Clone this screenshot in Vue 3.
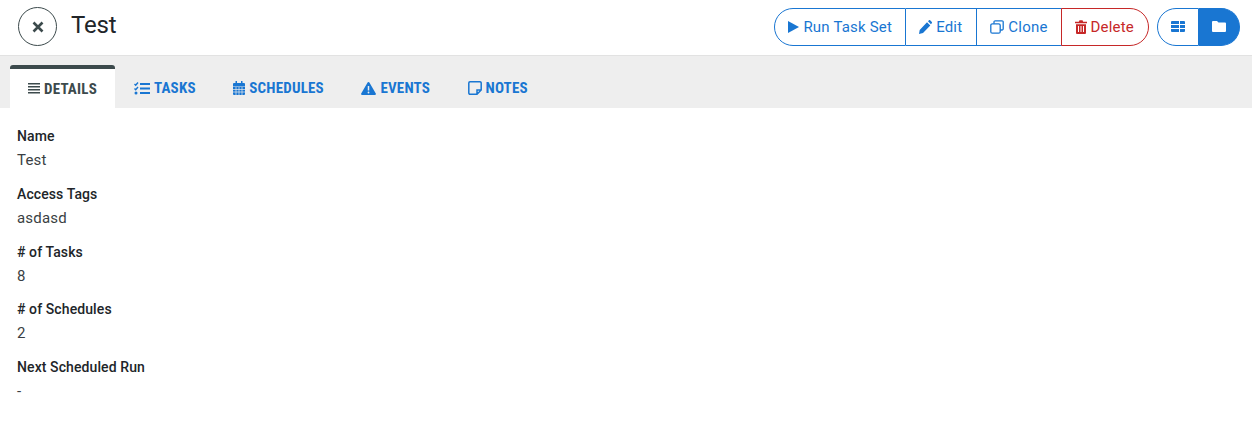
<script setup>
const details = [
  { label: 'Name', value: 'Test' },
  { label: 'Access Tags', value: 'asdasd' },
  { label: '# of Tasks', value: '8' },
  { label: '# of Schedules', value: '2' },
  { label: 'Next Scheduled Run', value: '-' },
]
</script>

<template>
  <div class="page">
    <header class="top">
      <button class="close">
        <svg width="12" height="12" viewBox="0 0 12 12"><path d="M1.500 1.500l9 9M10.500 1.500l-9 9" stroke="#3c4a4c" stroke-width="2.600" fill="none"/></svg>
      </button>
      <h1>Test</h1>
      <div class="actions">
        <div class="group">
          <button class="btn">
            <svg width="11" height="12" viewBox="0 0 11 12"><path d="M0 0v12l11-6z" fill="#1976d2"/></svg>
            Run Task Set
          </button>
          <button class="btn edit">
            <svg width="13" height="14" viewBox="0 0 13 14"><path d="M0 14l.7-4L8 2.200l3.300 3.300-7.300 7.600zM9 1.200l.7-.8a1.200 1.200 0 0 1 1.700 0l1.200 1.300a1.200 1.200 0 0 1 0 1.700l-.7.8z" fill="#1976d2"/></svg>
            Edit
          </button>
          <button class="btn">
            <svg width="14" height="14" viewBox="0 0 14 14"><path d="M4 3.800V2a1.200 1.200 0 0 1 1.200-1.200h6.800A1.200 1.200 0 0 1 13.200 2v6.800a1.200 1.200 0 0 1-1.200 1.200h-1.800" stroke="#1976d2" stroke-width="1.300" fill="none"/><rect x=".8" y="3.800" width="9.400" height="9.400" rx="1.500" stroke="#1976d2" stroke-width="1.300" fill="none"/></svg>
            Clone
          </button>
          <button class="btn danger">
            <svg width="12" height="14" viewBox="0 0 12 14"><path d="M0 1.800h3.800L4.500.2h3l.7 1.600H12v1.400H0zM1 4.200h10V13a1 1 0 0 1-1 1H2a1 1 0 0 1-1-1z" fill="#c62828"/><path d="M3.500 6v6M6 6v6M8.500 6v6" stroke="#fff"/></svg>
            Delete
          </button>
        </div>
        <div class="group view">
          <button class="btn">
            <svg width="14" height="11" viewBox="0 0 14 11"><path d="M0 1a1 1 0 0 1 1-1h7v3H0zM9 0h4a1 1 0 0 1 1 1v2H9zM0 4h8v3H0zM9 4h5v3H9zM0 8h8v3H1a1 1 0 0 1-1-1zM9 8h5v2a1 1 0 0 1-1 1H9z" fill="#1976d2"/></svg>
          </button>
          <button class="btn on">
            <svg width="14" height="11" viewBox="0 0 14 11"><path d="M0 1a1 1 0 0 1 1-1h4l1.500 1.500H13a1 1 0 0 1 1 1V10a1 1 0 0 1-1 1H1a1 1 0 0 1-1-1z" fill="#fff"/></svg>
          </button>
        </div>
      </div>
    </header>

    <nav class="tabs">
      <a class="tab active">
        <svg width="12" height="12" viewBox="0 0 12 12"><path d="M0 .800h12M0 3.800h12M0 6.800h12M0 9.800h12" stroke="#3c4a4c" stroke-width="1.500"/></svg>
        <span>DETAILS</span>
      </a>
      <a class="tab">
        <svg width="16" height="13" viewBox="0 0 16 13"><path d="M6 2h10M6 6.500h10M6 11h10" stroke="#1976d2" stroke-width="2"/><path d="M.5 2l1.200 1.200L4 .5M.5 6.500l1.200 1.200L4 5" stroke="#1976d2" stroke-width="1.400" fill="none"/><circle cx="2" cy="11" r="1.500" fill="#1976d2"/></svg>
        <span>TASKS</span>
      </a>
      <a class="tab">
        <svg width="12" height="14" viewBox="0 0 12 14"><path d="M1 2h10a1 1 0 0 1 1 1v2H0V3a1 1 0 0 1 1-1zM2.500 0h1.500v3H2.500zM8 0h1.500v3H8z" fill="#1976d2"/><path d="M0 5.500h12V13a1 1 0 0 1-1 1H1a1 1 0 0 1-1-1z" fill="#1976d2"/><path d="M0 8.500h12M0 11h12M3 6v8M6 6v8M9 6v8" stroke="#eee" stroke-width=".7"/></svg>
        <span>SCHEDULES</span>
      </a>
      <a class="tab">
        <svg width="15" height="13" viewBox="0 0 15 13"><path d="M7.500 0a1 1 0 0 1 .9.500l6.400 11a1 1 0 0 1-.9 1.500H1.100a1 1 0 0 1-.9-1.500l6.400-11A1 1 0 0 1 7.500 0z" fill="#1976d2"/><path d="M7.500 4v4.500" stroke="#eee" stroke-width="1.500"/><circle cx="7.500" cy="10.500" r=".9" fill="#eee"/></svg>
        <span>EVENTS</span>
      </a>
      <a class="tab">
        <svg width="14" height="14" viewBox="0 0 14 14"><path d="M13.200 9V2a1.200 1.200 0 0 0-1.200-1.200H2A1.200 1.200 0 0 0 .8 2v10A1.200 1.200 0 0 0 2 13.200h7zM13.200 9H9v4.200" stroke="#1976d2" stroke-width="1.500" fill="none"/></svg>
        <span>NOTES</span>
      </a>
    </nav>

    <main class="details">
      <div v-for="d in details" :key="d.label" class="row">
        <div class="label">{{ d.label }}</div>
        <div class="value">{{ d.value }}</div>
      </div>
    </main>
  </div>
</template>

<style scoped>
.page {
  width: 1252px;
  height: 423px;
  font-family: Roboto, sans-serif;
  color: #212529;
  background: #fff;
  overflow: hidden;
}
.top {
  height: 55px;
  box-sizing: border-box;
  display: flex;
  align-items: center;
  padding: 0 12px 2px 18px;
}
.close {
  width: 39px;
  height: 39px;
  border: 1px solid #3c4a4c;
  border-radius: 50%;
  background: #fff;
  padding: 0;
  display: flex;
  align-items: center;
  justify-content: center;
}
h1 {
  margin: 0 0 4px 14px;
  font-size: 24px;
  font-weight: 400;
  letter-spacing: -.2px;
  color: #212529;
}
.actions {
  margin-left: auto;
  display: flex;
  gap: 8px;
}
.group {
  display: flex;
  height: 38px;
}
.btn {
  height: 38px;
  box-sizing: border-box;
  display: flex;
  align-items: center;
  gap: 4px;
  padding: 0 13px;
  border: 1px solid #1976d2;
  border-left: 0;
  background: #fff;
  color: #1976d2;
  font: 400 15px Roboto, sans-serif;
  letter-spacing: .2px;
}
.btn.edit {
  padding-right: 14px;
}
.btn:first-child {
  border-left: 1px solid #1976d2;
  border-radius: 19px 0 0 19px;
}
.btn.danger {
  color: #c62828;
  border-color: #c62828;
  border-left: 1px solid #c62828;
  margin-left: -1px;
  padding-right: 14px;
  border-radius: 0 19px 19px 0;
}
.view .btn {
  width: 41px;
  justify-content: center;
  padding: 0;
}
.view .btn:first-child {
  width: 42px;
}
.view .on {
  background: #1976d2;
  border-radius: 0 19px 19px 0;
}
.tabs {
  height: 53px;
  box-sizing: border-box;
  background: #eee;
  border-top: 1px solid #e2e2e2;
  padding: 9px 0 0 10px;
  display: flex;
}
.tab {
  height: 43px;
  box-sizing: border-box;
  display: flex;
  align-items: center;
  justify-content: center;
  gap: 4px;
  padding: 3px 18.500px 0 19px;
  color: #1976d2;
  font-size: 15px;
  font-weight: 700;
  letter-spacing: .2px;
}
.tab span {
  display: inline-block;
  font-stretch: 75%;
}
.tab.active {
  width: 105px;
  padding: 1px 0 0;
  background: #fff;
  color: #3c4a4c;
  border-top: 4px solid #3c4a4c;
  border-radius: 3px 3px 0 0;
}
.details {
  padding: 19px 17px 0;
}
.row {
  height: 57.750px;
}
.label {
  font-size: 14px;
  font-weight: 475;
  letter-spacing: .1px;
  line-height: 18px;
}
.value {
  margin-top: 4px;
  font-size: 15px;
  line-height: 22px;
  letter-spacing: .2px;
  color: #3a3f44;
}
</style>
